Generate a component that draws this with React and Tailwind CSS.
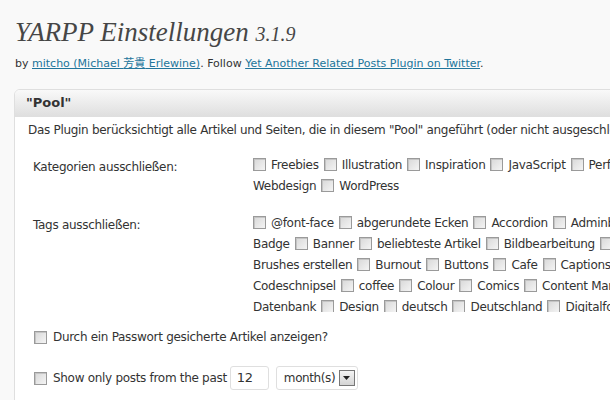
import React from "react";

function Cb() {
  return (
    <span className="inline-block align-middle w-[13px] h-[13px] border border-[#9a9a9a] bg-gradient-to-br from-[#d8d8d8] to-[#f4f4f4] shrink-0 shadow-[inset_1px_1px_0_#c4c4c4]" />
  );
}

function Line({ lead, items }) {
  return (
    <div className="flex items-center whitespace-nowrap h-[21px]">
      {lead && <span className="mr-[5px]">{lead}</span>}
      {items.map((t, i) => (
        <span key={i} className="flex items-center mr-[5px]">
          <Cb />
          <span className="ml-[5px]">{t}</span>
        </span>
      ))}
    </div>
  );
}

export default function App() {
  return (
    <div className="w-[610px] h-[400px] overflow-hidden bg-[#f9f9f9] text-[#333] font-['DejaVu_Sans',sans-serif] text-[12px] tracking-[-0.3px]">
      <div className="pl-[15px] pt-[15px]">
        <h2 className="font-['Liberation_Serif',serif] italic text-[#464646] text-[27px] leading-[34px] tracking-normal">
          YARPP Einstellungen <span className="text-[20px]">3.1.9</span>
        </h2>
        <p className="mt-[4px] text-[11px] leading-[14px] tracking-normal">
          by{" "}
          <span className="text-[#21759b] underline">
            mitcho (Michael <span className="font-['Noto_Sans_CJK_JP',sans-serif]">芳貴</span> Erlewine)
          </span>
          . Follow{" "}
          <span className="text-[#21759b] underline">Yet Another Related Posts Plugin on Twitter</span>.
        </p>
      </div>
      <div className="ml-[14px] mt-[18px] w-[660px] border border-[#dfdfdf] rounded-tl-[6px] bg-white overflow-hidden">
        <div className="h-[27px] flex items-center pl-[11px] bg-gradient-to-b from-[#f9f9f9] to-[#dfdfdf] border-b border-[#dfdfdf] font-bold text-[13px] tracking-normal">
          "Pool"
        </div>
        <div className="pl-[13px] pt-[5px]">
          <p className="leading-[16px] whitespace-nowrap">
            Das Plugin berücksichtigt alle Artikel und Seiten, die in diesem "Pool" angeführt (oder nicht ausgeschlossen) sind.
          </p>
          <div className="flex mt-[20px]">
            <div className="w-[225px] pl-[5px]">Kategorien ausschließen:</div>
            <div className="flex-1 -mt-[4px]">
              <Line items={["Freebies", "Illustration", "Inspiration", "JavaScript", "Performance"]} />
              <Line lead="Webdesign" items={["WordPress"]} />
            </div>
          </div>
          <div className="flex mt-[20px]">
            <div className="w-[225px] pl-[5px]">Tags ausschließen:</div>
            <div className="flex-1 -mt-[4px] h-[100px] overflow-hidden">
              <Line items={["@font-face", "abgerundete Ecken", "Accordion", "Adminbereich"]} />
              <Line lead="Badge" items={["Banner", "beliebteste Artikel", "Bildbearbeitung", "Blog"]} />
              <Line lead="Brushes erstellen" items={["Burnout", "Buttons", "Cafe", "Captions"]} />
              <Line lead="Codeschnipsel" items={["coffee", "Colour", "Comics", "Content Management"]} />
              <Line lead="Datenbank" items={["Design", "deutsch", "Deutschland", "Digitalfotografie"]} />
            </div>
          </div>
          <div className="flex items-center mt-[16px] pl-[6px]">
            <Cb />
            <span className="ml-[6px]">Durch ein Passwort gesicherte Artikel anzeigen?</span>
          </div>
          <div className="flex items-center mt-[20px] pl-[6px] pb-[20px]">
            <Cb />
            <span className="ml-[6px]">Show only posts from the past</span>
            <span className="ml-[3px] w-[39px] h-[24px] border border-[#dfdfdf] rounded-[3px] flex items-center pl-[6px] text-[13px]">12</span>
            <span className="ml-[7px] w-[82px] h-[24px] border border-[#dfdfdf] rounded-[3px] flex items-center pl-[7px] text-[12px] tracking-[-0.4px]">
              month(s)
              <span className="ml-auto mr-[2px] w-[16px] h-[16px] border border-[#777] bg-gradient-to-b from-[#f4f4f4] to-[#d4d4d4] flex items-center justify-center">
                <svg width="7" height="4" viewBox="0 0 7 4"><path d="M0 0h7L3.5 4z" fill="#222" /></svg>
              </span>
            </span>
          </div>
        </div>
      </div>
    </div>
  );
}
